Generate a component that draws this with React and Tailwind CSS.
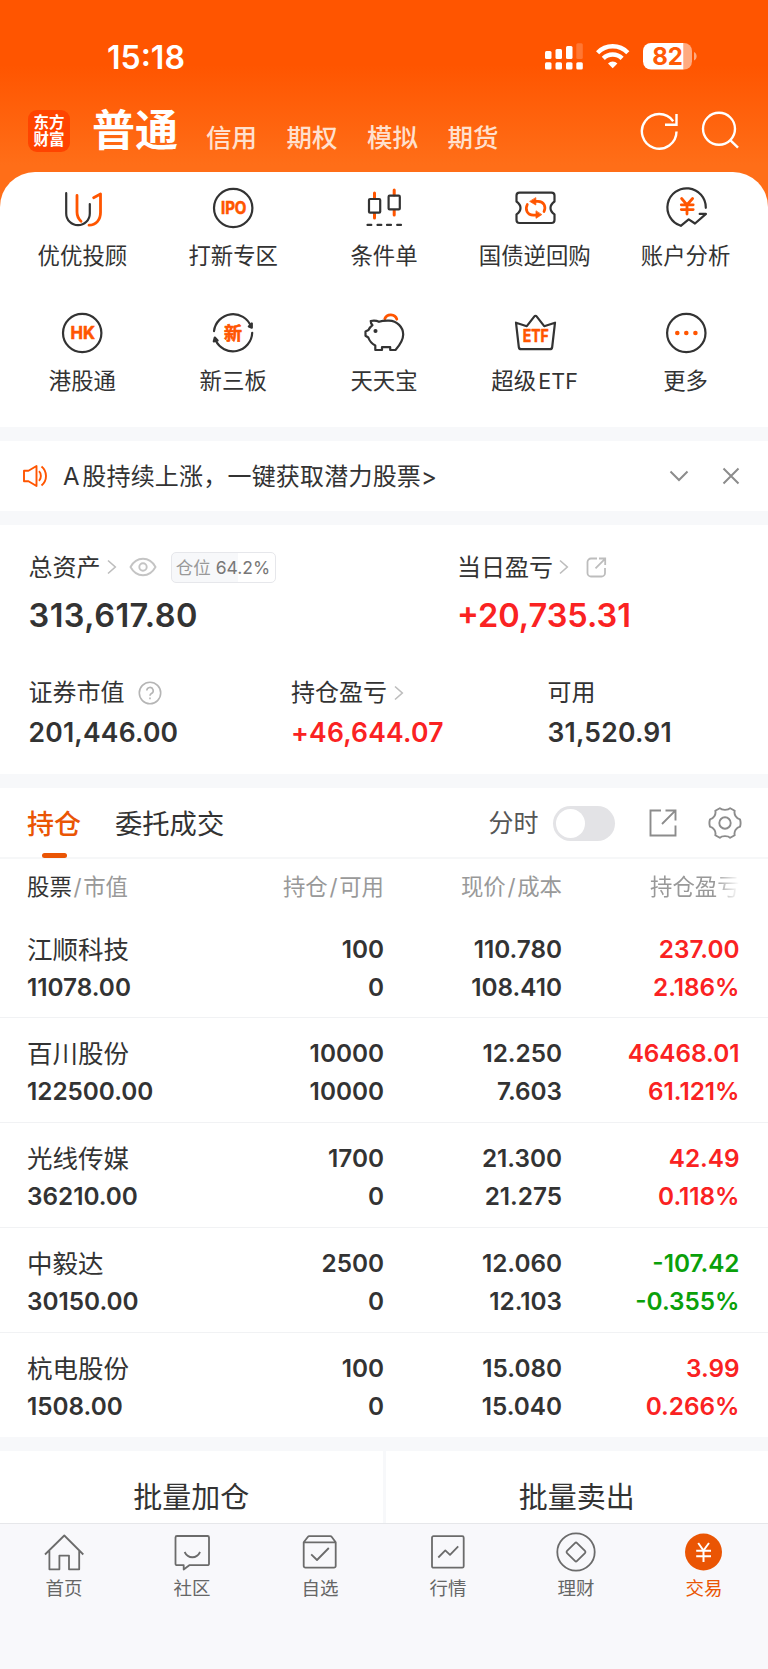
import { useState } from "react";
import clsx from "clsx";

const DARK = "#333333";
const ORANGE = "#ff5500";

/* ICONOS DEL MENU */
function MenuIcon({ name }) {

  const base = {
    width: 48,
    height: 48,
    viewBox: "0 0 48 48",
    fill: "none",
    stroke: DARK,
    strokeWidth: 2.2,
    strokeLinecap: "round",
    strokeLinejoin: "round"
  };

  const textProps = {
    fill: ORANGE,
    stroke: ORANGE,
    strokeWidth: 0.6,
    fontWeight: 700,
    textAnchor: "middle",
    fontFamily: "Inter, 'Noto Sans CJK SC', sans-serif"
  };

  switch (name) {
    case "advisor":
      return (
        <svg {...base}>
          <path d="M8.2 9.2V29.4a11.8 11.8 0 0 0 23.6 0V20" />
          <g stroke={ORANGE} strokeWidth="2.8">
            <path d="M19 11.4V28c0 4 1.4 6.8 4 9.2" />
            <path d="M35.6 13.7L42.5 10V28.5c0 7.5-4.5 12.500-11.500 12.700" />
          </g>
        </svg>
      );
    case "ipo":
      return (
        <svg {...base}>
          <circle cx="24.2" cy="24" r="19.2" />
          <text x="24.7" y="30" fontSize="17" textLength="25.5" lengthAdjust="spacingAndGlyphs" {...textProps}>IPO</text>
        </svg>
      );
    case "candle":
      return (
        <svg {...base}>
          <g stroke={ORANGE} strokeWidth="3">
            <path d="M14.500 9V14M14.500 29.500V34M34.200 6V11M34.200 26.500V31" />
          </g>
          <rect x="9" y="15" width="11.200" height="13.700" rx="1" />
          <rect x="28.600" y="11.700" width="11.200" height="13.700" rx="1" />
          <path d="M7.500 40.900H11.300M17.500 40.900H21.300M27 40.900H31M37.200 40.900H41" />
        </svg>
      );
    case "repo":
      return (
        <svg {...base}>
          <path d="M8.500 8.600H40.500a3 3 0 0 1 3 3V17.500c-2.800 2-4 4-4 6.400s1.200 4.400 4 6.400V36a3 3 0 0 1-3 3H8.500a3 3 0 0 1-3-3V30.300c2.800-2 4-4 4-6.400s-1.200-4.400-4-6.400V11.600a3 3 0 0 1 3-3z" />
          <g stroke={ORANGE} strokeWidth="2.700">
            <path d="M16.300 20.500c-2.500 5-.2 10.700 6 10.700H27" />
            <path d="M33 27.500c2.300-5 0-10.200-6-10.200H22.500" />
          </g>
          <path d="M24.800 14V21L19 17.600zM25 27.200V34.300L30.500 30.800z" fill={ORANGE} stroke={ORANGE} strokeWidth="0.800" />
        </svg>
      );
    case "analysis":
      return (
        <svg {...base}>
          <path d="M43.800 23.800a19.200 19.200 0 1 0-25 18L26.700 35.300L33 39.500L44 29.900H37.700" />
          <path d="M19.600 14.500L25 20.800L30.600 14.500M25 20.800V30M19.300 20.800H31.200M19.300 25.600H31.200" stroke={ORANGE} strokeWidth="2.800" />
        </svg>
      );
    case "hk":
      return (
        <svg {...base}>
          <circle cx="24.200" cy="24" r="19.200" />
          <text x="24.700" y="30.200" fontSize="17.500" textLength="24.500" lengthAdjust="spacingAndGlyphs" {...textProps}>HK</text>
        </svg>
      );
    case "neeq":
      return (
        <svg {...base}>
          <path d="M5 22.200A19.200 19.200 0 0 1 42 17.500M43.200 23.800A19.200 19.200 0 0 1 6.500 31" />
          <path d="M42.800 14.500V18.700L39.800 17.500zM5.800 28.500L8.600 31.500L4.800 32.300z" fill={DARK} />
          <text x="24" y="30.700" fontSize="18" {...textProps}>新</text>
        </svg>
      );
    case "piggy":
      return (
        <svg {...base}>
          <path d="M24.800 9.800a6.300 6 0 0 1 12 .4" stroke={ORANGE} strokeWidth="2.800" />
          <path d="M10.700 12C14 11.300 16.500 11.500 19 12.800C22 11.700 25 11.600 29 11.700C37 12 43.200 18 43.200 25.500C43.200 32 39 37 35.500 41H30.200V38.200H22V41H15.300V36.500C11.500 34.500 9.500 32 8.300 28.500L5.500 26.700V22.500L8.500 21C9.500 19 10.700 17.500 12.500 16.200C11.300 15 10.700 13.500 10.700 12z" />
          <circle cx="15.500" cy="22" r="1.300" fill={DARK} strokeWidth="1.500" />
        </svg>
      );
    case "etf":
      return (
        <svg {...base}>
          <path d="M5 13.700L15.800 17.200L23.400 7.400a1.400 1.400 0 0 1 2.200 0L33.200 17.200L44 13.700L41.200 38a2.500 2.500 0 0 1-2.500 2.200H10.300A2.500 2.500 0 0 1 7.800 38z" />
          <text x="24.800" y="33.200" fontSize="17" textLength="26" lengthAdjust="spacingAndGlyphs" {...textProps}>ETF</text>
        </svg>
      );
    default:
      return (
        <svg {...base}>
          <circle cx="24.300" cy="24" r="19.200" />
          <g fill={ORANGE} stroke="none">
            <circle cx="15.300" cy="24" r="2.300" />
            <circle cx="24.300" cy="24" r="2.300" />
            <circle cx="33.400" cy="24" r="2.300" />
          </g>
        </svg>
      );
  }
}

/* ICONOS DE LA BARRA INFERIOR */
function TabIcon({ name }) {

  const base = {
    width: 40,
    height: 40,
    viewBox: "0 0 40 40",
    fill: "none",
    stroke: "#6b6b6b",
    strokeWidth: 1.8,
    strokeLinejoin: "round"
  };

  switch (name) {
    case "home":
      return (
        <svg {...base}>
          <path d="M1 22.500L20.300 3.500L39.300 22.500M5.400 19V37.300H15.400V23.600H25V37.300H35.200V19" />
        </svg>
      );
    case "chat":
      return (
        <svg {...base}>
          <path d="M5 4H35.500a1.500 1.500 0 0 1 1.500 1.500V31.700a1.500 1.500 0 0 1-1.500 1.500H17.300L11.700 37.500V33.200H5a1.500 1.500 0 0 1-1.500-1.500V5.500A1.500 1.500 0 0 1 5 4z" />
          <path d="M12.600 20c3.500 7 12 7 15.500 0" />
        </svg>
      );
    case "star":
      return (
        <svg {...base}>
          <path d="M3.700 10.300L7.800 5a2 2 0 0 1 1.500-.8H30.300a2 2 0 0 1 1.500.8L35.700 10.300V34a1.700 1.700 0 0 1-1.700 1.700H5.400A1.700 1.700 0 0 1 3.700 34zM3.700 10.300H35.700M11.200 22.300L17 28L28.800 16" />
        </svg>
      );
    case "market":
      return (
        <svg {...base}>
          <rect x="4" y="4.200" width="31.700" height="31.500" rx="1.500" />
          <path d="M10.300 25.500L17.300 18.400L22 22.800L30.200 14.300" />
        </svg>
      );
    case "wealth":
      return (
        <svg {...base}>
          <circle cx="20" cy="20" r="18.700" />
          <rect x="12.900" y="12.900" width="14.200" height="14.200" rx="1.500" transform="rotate(45 20 20)" />
        </svg>
      );
    default:
      return (
        <svg {...base} stroke="#ffffff" strokeWidth="2">
          <circle cx="19.500" cy="20" r="18.500" fill="#ea5504" stroke="none" />
          <path d="M14.200 11L19.500 18.500L25 11M19.500 18.500V30M12.200 18.800H27M12.200 24.200H27" />
        </svg>
      );
  }
}

function Chevron({ className }) {
  return (
    <svg width="10" height="16" viewBox="0 0 10 16" fill="none" stroke="#bdbdbd" strokeWidth="1.6" className={className}>
      <path d="M1 1.500L8.300 8L1 14.500" />
    </svg>
  );
}

const menu = [
  { icon: "advisor", label: "优优投顾" },
  { icon: "ipo", label: "打新专区" },
  { icon: "candle", label: "条件单" },
  { icon: "repo", label: "国债逆回购" },
  { icon: "analysis", label: "账户分析" },
  { icon: "hk", label: "港股通" },
  { icon: "neeq", label: "新三板" },
  { icon: "piggy", label: "天天宝" },
  { icon: "etf", label: "超级", suffix: "ETF" },
  { icon: "more", label: "更多" }
];

const holdings = [
  { name: "江顺科技", value: "11078.00", qty: "100", avail: "0", price: "110.780", cost: "108.410", pnl: "237.00", pct: "2.186%" },
  { name: "百川股份", value: "122500.00", qty: "10000", avail: "10000", price: "12.250", cost: "7.603", pnl: "46468.01", pct: "61.121%" },
  { name: "光线传媒", value: "36210.00", qty: "1700", avail: "0", price: "21.300", cost: "21.275", pnl: "42.49", pct: "0.118%" },
  { name: "中毅达", value: "30150.00", qty: "2500", avail: "0", price: "12.060", cost: "12.103", pnl: "-107.42", pct: "-0.355%" },
  { name: "杭电股份", value: "1508.00", qty: "100", avail: "0", price: "15.080", cost: "15.040", pnl: "3.99", pct: "0.266%" }
];

const tabs = [
  { icon: "home", label: "首页" },
  { icon: "chat", label: "社区" },
  { icon: "star", label: "自选" },
  { icon: "market", label: "行情" },
  { icon: "wealth", label: "理财" },
  { icon: "trade", label: "交易" }
];

function StatusBar() {
  return (
    <div className="h-[100px] pt-[39px] pl-[107px] pr-[70px] flex items-start justify-between text-white">

      <span className="text-[32px] leading-[37px] font-semibold">15:18</span>

      <svg width="153" height="30" viewBox="0 0 153 30" className="mt-[2px]" fill="#ffffff">
        {/* SEÑAL */}
        <rect x="0" y="10" width="6.500" height="8" rx="1.500" />
        <rect x="10.500" y="8" width="6.500" height="10" rx="1.500" />
        <rect x="21" y="5" width="6.500" height="13" rx="1.500" />
        <rect x="31.300" y="2.300" width="6.500" height="15.700" rx="1.500" opacity="0.200" />
        <rect x="0" y="21.300" width="6.500" height="7.200" rx="1.500" />
        <rect x="10.500" y="21.300" width="6.500" height="7.200" rx="1.500" />
        <rect x="21" y="21.300" width="6.500" height="7.200" rx="1.500" />
        <rect x="31.300" y="21.300" width="6.500" height="7.200" rx="1.500" />

        {/* WIFI */}
        <g fill="none" stroke="#ffffff" strokeWidth="4.400">
          <path d="M52.600 11.700a21 21 0 0 1 30.200 0" />
          <path d="M58.300 17.400a13.300 13.300 0 0 1 18.800 0" />
        </g>
        <path d="M67.700 27.200l-4.700-4.800a7 7 0 0 1 9.400 0z" />

        {/* BATERIA */}
        <path d="M106 2H138.500V28.500H106a8 8 0 0 1-8-8V10a8 8 0 0 1 8-8z" />
        <path d="M138.500 2H139a8 8 0 0 1 8 8V20.500a8 8 0 0 1-8 8H138.500z" opacity="0.500" />
        <path d="M149 11c3.500 1.500 3.500 7 0 8.500z" opacity="0.500" />
        <text x="122.500" y="23.700" fontSize="24" fontWeight="700" textAnchor="middle" fill="#ff5a05" fontFamily="Inter, sans-serif">82</text>
      </svg>

    </div>
  );
}

function Header() {
  return (
    <div className="h-[71.500px] pl-7 pr-7 flex items-start text-white">

      {/* LOGO */}
      <div className="mt-[10px] w-[42px] h-[42px] rounded-[9px] bg-[#ff4400] flex flex-col items-center justify-center text-[15.500px] leading-[17px] font-bold">
        <span>东方</span>
        <span>财富</span>
      </div>

      <span className="ml-[22px] text-[43px] leading-[61px] font-bold">普通</span>

      <div className="ml-[28px] mt-[18px] flex gap-[29.500px] text-[25.500px] leading-[40px] font-medium text-[#ffe0ce]">
        <span>信用</span>
        <span>期权</span>
        <span>模拟</span>
        <span>期货</span>
      </div>

      <svg width="100" height="42" viewBox="0 0 100 42" className="ml-auto mt-[10px]" fill="none" stroke="#ffffff" strokeWidth="2.400">
        <path d="M36.500 21.500A17.300 17.300 0 1 1 33.200 11.200" />
        <path d="M36.500 4V14.700H25" />
        <circle cx="79" cy="18.800" r="16" />
        <path d="M90.500 30.300L98 37.700" />
      </svg>

    </div>
  );
}

function Menu() {
  return (
    <div className="h-[255.500px] pt-[12px] px-[7px] rounded-t-[35px] bg-white grid grid-cols-5 auto-rows-[125.500px]">

      {menu.map((m) => (
        <div key={m.icon} className="flex flex-col items-center">
          <MenuIcon name={m.icon} />
          <span className="mt-[9px] text-[22.400px] leading-[30px] whitespace-nowrap">
            {m.label}
            {m.suffix && <span className="ml-[2px] text-[21.500px] tracking-[0.200px]">{m.suffix}</span>}
          </span>
        </div>
      ))}

    </div>
  );
}

function Notice({ onClose }) {
  return (
    <div className="h-[70px] pl-[22px] pr-[28px] flex items-center bg-white">

      <svg width="26" height="24" viewBox="0 0 26 24" fill="none" stroke="#ff5500" strokeWidth="1.900" strokeLinejoin="round">
        <path d="M2 6.700H6.500L14.500 2V22L6.500 17.300H2z" />
        <path d="M17 7.200c2.500 2.500 2.500 7.100 0 9.600M19.500 2.500c6 5 6 14 0 19" />
      </svg>

      <span className="ml-[15px] pt-[2px] text-[24px] leading-[34px] tracking-[0.200px]">
        A<span className="ml-[2.500px]">股持续上涨，一键获取潜力股票&gt;</span>
      </span>

      <svg width="20" height="14" viewBox="0 0 20 14" className="ml-auto" fill="none" stroke="#8c8c8c" strokeWidth="2">
        <path d="M1.500 2.500L10 11L18.500 2.500" />
      </svg>

      <button onClick={onClose} className="ml-[33px]">
        <svg width="18" height="18" viewBox="0 0 18 18" fill="none" stroke="#8c8c8c" strokeWidth="2">
          <path d="M1.500 1.500L16.500 16.500M16.500 1.500L1.500 16.500" />
        </svg>
      </button>

    </div>
  );
}

function Assets() {
  return (
    <div className="h-[249px] pt-[25px] bg-white">

      {/* TOTALES */}
      <div className="flex pl-[28.500px]">

        <div className="w-[428.500px]">
          <div className="h-[34px] flex items-center">
            <span className="pt-[2px] text-[24px]">总资产</span>
            <Chevron className="ml-[6px]" />
            <svg width="28" height="20" viewBox="0 0 28 20" className="ml-[12px]" fill="none" stroke="#c4c4c4" strokeWidth="1.900">
              <path d="M1.500 10C7.500-1 20.500-1 26.500 10C20.500 21 7.500 21 1.500 10z" />
              <circle cx="14" cy="10" r="3.700" />
            </svg>
            <span className="ml-[14px] pt-[2px] w-[105px] h-[31px] flex items-center justify-center gap-[5px] rounded-[5px] border border-[#e6e7eb] bg-[linear-gradient(90deg,#f7f8fa_64.2%,#ffffff_64.2%)] text-[17.500px]">
              <span className="text-[#999999]">仓位</span>
              <span className="text-[#777777]">64.2%</span>
            </span>
          </div>
          <div className="mt-[12px] text-[32.500px] leading-[40px] tracking-[0.450px] font-semibold">313,617.80</div>
        </div>

        <div>
          <div className="h-[34px] flex items-center">
            <span className="pt-[2px] text-[24px]">当日盈亏</span>
            <Chevron className="ml-[6px]" />
            <svg width="21" height="21" viewBox="0 0 21 21" className="ml-[17px]" fill="none" stroke="#bdbdbd" strokeWidth="1.800">
              <path d="M11 1.500H5a3.500 3.500 0 0 0-3.500 3.500V16A3.500 3.500 0 0 0 5 19.500H15.500A3.500 3.500 0 0 0 19 16V11M13 1.500H19.200V8M19 1.800L9.500 11.300" />
            </svg>
          </div>
          <div className="mt-[12px] text-[32.500px] leading-[40px] font-semibold text-[#fa2222]">+20,735.31</div>
        </div>

      </div>

      {/* DETALLE */}
      <div className="flex mt-[39.500px] pl-[28.500px]">

        <div className="w-[262.500px]">
          <div className="h-[34px] flex items-center">
            <span className="text-[24px]">证券市值</span>
            <svg width="24" height="24" viewBox="0 0 24 24" className="ml-[13px]" fill="none" stroke="#b5b5b5" strokeWidth="1.600">
              <circle cx="12" cy="12" r="10.700" />
              <path d="M8.800 9.600a3.200 3.200 0 1 1 4.600 2.900c-1 .6-1.400 1-1.400 2.300M12 16.500V18.300" />
            </svg>
          </div>
          <div className="mt-[7px] text-[26.500px] leading-[30px] tracking-[0.200px] font-semibold">201,446.00</div>
        </div>

        <div className="w-[256.500px]">
          <div className="h-[34px] flex items-center">
            <span className="text-[24px]">持仓盈亏</span>
            <Chevron className="ml-[7px]" />
          </div>
          <div className="mt-[7px] text-[26.500px] leading-[30px] tracking-[0.200px] font-semibold text-[#fa2222]">+46,644.07</div>
        </div>

        <div>
          <div className="h-[34px] flex items-center">
            <span className="text-[24px]">可用</span>
          </div>
          <div className="mt-[7px] text-[26.500px] leading-[30px] tracking-[0.200px] font-semibold">31,520.91</div>
        </div>

      </div>

    </div>
  );
}

function Toolbar({ minute, onToggle }) {
  return (
    <div className="h-[71px] pl-[27px] pr-[26.500px] flex items-center bg-white border-b-2 border-[#f6f7f8]">

      <div className="relative text-[27px] leading-[70px] font-medium text-[#ea5504]">
        <span className="block pt-[2px] -mb-[2px]">持仓</span>
        <span className="absolute left-[15px] bottom-0 w-[25px] h-[5px] rounded-full bg-[#ea5504]" />
      </div>
      <span className="ml-[34px] pt-[5px] text-[27.300px]">委托成交</span>

      <span className="ml-auto pt-[3px] text-[25px] text-[#555555]">分时</span>
      <button
        onClick={onToggle}
        className={clsx("ml-[14px] mt-px w-[62px] h-[35px] p-[3px] rounded-full flex", minute ? "justify-end bg-[#ea5504]" : "bg-[#e3e3e6]")}
      >
        <span className="w-[29px] h-[29px] rounded-full bg-white" />
      </button>

      <svg width="28" height="28" viewBox="0 0 28 28" className="ml-[34px] mt-px" fill="none" stroke="#8c8c8c" strokeWidth="1.900">
        <path d="M12 1.500H1.500V26.500H26.500V16.500M16.500 1.500H26.500V11.500M26.300 1.700L13 15" />
      </svg>

      <svg width="34" height="34" viewBox="0 0 34 34" className="ml-[31px] mt-px" fill="none" stroke="#8c8c8c" strokeWidth="1.900" strokeLinejoin="round">
        <path d="M11.800 2.200C13.800 4.400 20.200 4.400 22.200 2.200L26.700 4.800C25.700 8.500 28.500 12.500 32 13.400C32.700 15.500 32.700 18.500 32 20.600C28.500 21.500 25.700 25.500 26.700 29.200L22.200 31.800C20.200 29.600 13.800 29.600 11.800 31.800L7.300 29.200C8.300 25.500 5.500 21.500 2 20.600C1.300 18.500 1.300 15.500 2 13.400C5.500 12.500 8.300 8.500 7.300 4.800z" />
        <circle cx="17" cy="17" r="5.700" />
      </svg>

    </div>
  );
}

function Holdings() {
  return (
    <div className="bg-white">

      {/* ENCABEZADO */}
      <div className="h-[54.500px] pl-[27px] grid grid-cols-[157px_200px_178px_178px] items-center text-right text-[22.400px] leading-[56px] text-[#999999]">
        <span className="text-left"><span className="text-[#333333]">股票</span><span className="mx-[1.700px]">/</span>市值</span>
        <span>持仓<span className="mx-[1.700px]">/</span>可用</span>
        <span>现价<span className="mx-[1.700px]">/</span>成本</span>
        <span className="ml-[88px] w-[92px] whitespace-nowrap text-left mask-[linear-gradient(90deg,#000_70%,transparent_97%)]">持仓盈亏</span>
      </div>

      {/* FILAS */}
      {holdings.map((h, i) => (
        <div
          key={h.name}
          className={clsx(
            "h-[104.800px] pt-[16px] pl-[27px] grid grid-cols-[157px_200px_178px_177.500px] auto-rows-[38px] text-right text-[24.300px] leading-[38px] font-semibold",
            i < holdings.length - 1 && "border-b border-[#f1f2f4]"
          )}
        >
          <span className="pt-px text-left text-[25.500px] font-normal">{h.name}</span>
          <span>{h.qty}</span>
          <span>{h.price}</span>
          <span className={h.pnl.startsWith("-") ? "text-[#0aa00a]" : "text-[#fa2222]"}>{h.pnl}</span>

          <span className="text-left">{h.value}</span>
          <span>{h.avail}</span>
          <span>{h.cost}</span>
          <span className={h.pnl.startsWith("-") ? "text-[#0aa00a]" : "text-[#fa2222]"}>{h.pct}</span>
        </div>
      ))}

    </div>
  );
}

function TabBar() {
  return (
    <div className="h-[146px] shrink-0 pt-[7.500px] grid grid-cols-6 items-start border-t border-[#e6e7ea] bg-[#f8f8fb]">

      {tabs.map((t) => (
        <div key={t.icon} className={clsx("flex flex-col items-center", t.icon === "trade" ? "text-[#ea5504]" : "text-[#666666]")}>
          <TabIcon name={t.icon} />
          <span className="mt-[4px] text-[18.500px] leading-[25px]">{t.label}</span>
        </div>
      ))}

    </div>
  );
}

function App() {

  const [minute, setMinute] = useState(false);
  const [notice, setNotice] = useState(true);

  return (

    <div className="w-[768px] h-[1669px] overflow-hidden flex flex-col bg-[#f7f8fa] text-[#333333] font-[Inter,'Noto_Sans_CJK_SC',sans-serif]">

      <div className="bg-[linear-gradient(180deg,#ff5500_65px,#ff6e18_165px)]">
        <StatusBar />
        <Header />
        <Menu />
      </div>

      {notice && (
        <div className="pt-[14px]">
          <Notice onClose={() => setNotice(false)} />
        </div>
      )}

      <div className="pt-[14px]">
        <Assets />
      </div>

      <div className="pt-[14px]">
        <Toolbar minute={minute} onToggle={() => setMinute(!minute)} />
        <Holdings />
      </div>

      {/* ACCIONES */}
      <div className="pt-[14px] flex-1 min-h-0 grid grid-cols-2 gap-[3px] text-center text-[29px] leading-[40px]">
        <div className="bg-white pt-[27px]">批量加仓</div>
        <div className="bg-white pt-[27px]">批量卖出</div>
      </div>

      <TabBar />

    </div>

  );

}

export default App;
